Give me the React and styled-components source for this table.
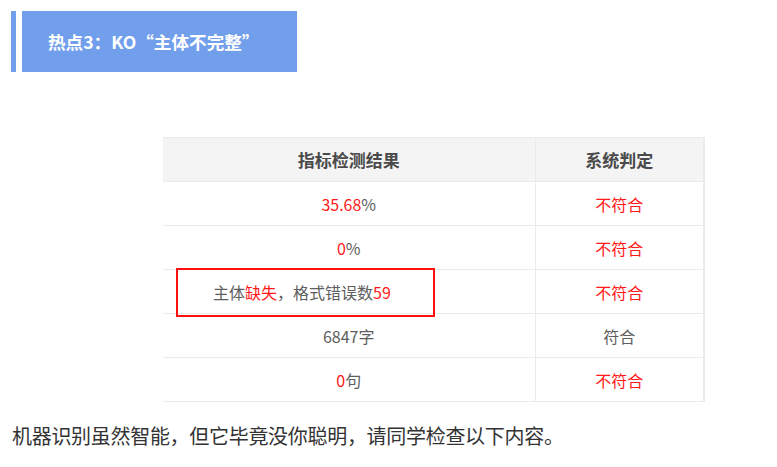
import React from "react";
import styled, { createGlobalStyle } from "styled-components";

const GlobalStyle = createGlobalStyle`
  html, body {
    margin: 0;
    padding: 0;
    background: #ffffff;
    font-family: "Noto Sans CJK SC", "Noto Sans", sans-serif;
  }
`;

const Page = styled.div`
  width: 777px;
  height: 467px;
  overflow: hidden;
`;

const Heading = styled.div`
  display: flex;
  gap: 6px;
  margin: 11px 0 0 11px;
  height: 61px;
`;

const HeadingBar = styled.div`
  width: 5px;
  background: #729fec;
`;

const HeadingBox = styled.div`
  width: 275px;
  background: #729fec;
  color: #ffffff;
  font-size: 17.6px;
  font-weight: 700;
  display: flex;
  align-items: center;
  padding-left: 26px;
  box-sizing: border-box;
`;

const Table = styled.table`
  margin: 65px 0 0 163px;
  width: 542px;
  border-collapse: collapse;
  font-size: 16px;
  color: #5e5e5e;
  table-layout: fixed;
`;

const HeadCell = styled.th`
  height: 43px;
  background: #f4f4f4;
  font-size: 17px;
  font-weight: 700;
  color: #4a4a4a;
  border-top: 1px solid #ebebeb;
  border-bottom: 1px solid #ebebeb;
  border-right: ${(p) => (p.$last ? "2px" : "1px")} solid #ebebeb;
  padding: 0;
`;

const Cell = styled.td`
  position: relative;
  height: 43px;
  text-align: ${(p) => (p.$marked ? "left" : "center")};
  padding: ${(p) => (p.$marked ? "0 0 0 50px" : "0")};
  border-bottom: 1px solid #ebebeb;
  border-right: ${(p) => (p.$last ? "2px" : "1px")} solid #ebebeb;
  color: ${(p) => (p.$red ? "#ff1a1a" : "#5e5e5e")};
`;

const Red = styled.span`
  color: #ff1a1a;
`;

const Highlight = styled.div`
  position: absolute;
  left: 13px;
  top: -2px;
  width: 259px;
  height: 49px;
  border: 2px solid #ff1010;
  box-sizing: border-box;
  pointer-events: none;
`;

const Note = styled.p`
  margin: 21px 0 0 12px;
  font-size: 20px;
  letter-spacing: -0.3px;
  color: #333;
  line-height: 26px;
`;

const rows = [
  { value: <><Red>35.68</Red>%</>, ok: false },
  { value: <><Red>0</Red>%</>, ok: false },
  {
    value: (
      <>
        主体<Red>缺失</Red>，格式错误数<Red>59</Red>
      </>
    ),
    ok: false,
    marked: true,
  },
  { value: <>6847字</>, ok: true },
  { value: <><Red>0</Red>句</>, ok: false },
];

export default function App() {
  return (
    <Page>
      <GlobalStyle />
      <Heading>
        <HeadingBar />
        <HeadingBox>热点3：KO“主体不完整”</HeadingBox>
      </Heading>
      <Table>
        <colgroup>
          <col style={{ width: 372 }} />
          <col />
        </colgroup>
        <thead>
          <tr>
            <HeadCell>指标检测结果</HeadCell>
            <HeadCell $last>系统判定</HeadCell>
          </tr>
        </thead>
        <tbody>
          {rows.map((r, i) => (
            <tr key={i}>
              <Cell $marked={r.marked}>
                {r.marked && <Highlight />}
                {r.value}
              </Cell>
              <Cell $last $red={!r.ok}>
                {r.ok ? "符合" : "不符合"}
              </Cell>
            </tr>
          ))}
        </tbody>
      </Table>
      <Note>机器识别虽然智能，但它毕竟没你聪明，请同学检查以下内容。</Note>
    </Page>
  );
}
